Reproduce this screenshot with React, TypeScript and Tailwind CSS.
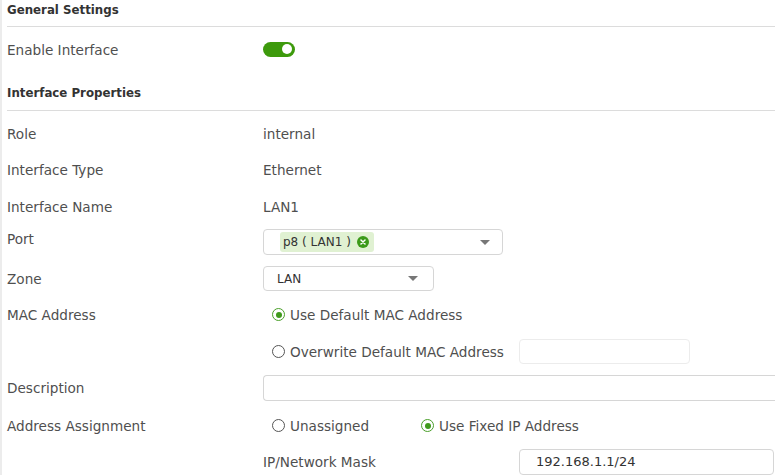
import React from "react";

const font = { fontFamily: '"DejaVu Sans", sans-serif' };

function Radio({ checked }: { checked?: boolean }) {
  return checked ? (
    <span className="inline-flex h-[13px] w-[13px] items-center justify-center rounded-full border-[1.5px] border-[#4a9f2a] mr-[5px]">
      <span className="h-[6px] w-[6px] rounded-full bg-[#3f9a1c]" />
    </span>
  ) : (
    <span className="inline-block h-[13px] w-[13px] rounded-full border-[1.5px] border-[#555] mr-[5px]" />
  );
}

function Caret() {
  return (
    <svg width="10" height="5" viewBox="0 0 10 5">
      <path d="M0 0 L10 0 L5 5 Z" fill="#777" />
    </svg>
  );
}

export default function App() {
  const label = "w-[256px] shrink-0 pt-[2px]";
  return (
    <div className="flex h-[475px] w-[775px] overflow-hidden bg-white text-[13.6px] text-[#4f4f4f]" style={font}>
      <div className="w-[2px] shrink-0 bg-[#ececec]" />
      <div className="flex-1 pl-[5px]">
        <div className="h-[27px] border-b border-[#dcdcdc] pt-[1px] text-[11.8px] font-bold text-[#333] leading-[19px]">General Settings</div>
        <div className="flex h-[44px] items-center">
          <div className={label}>Enable Interface</div>
          <div className="flex h-[15px] w-[32px] items-center justify-end rounded-full bg-[#3d9a0c] pr-[3px]">
            <div className="h-[10px] w-[10px] rounded-full bg-white" />
          </div>
        </div>
        <div className="h-[40px] border-b border-[#dcdcdc] pt-[13px] text-[11.8px] font-bold text-[#333] leading-[19px]">Interface Properties</div>
        <div className="mt-[4px] flex h-[36px] items-center">
          <div className={label}>Role</div>
          <div className="pt-[2px]">internal</div>
        </div>
        <div className="flex h-[37px] items-center">
          <div className={label}>Interface Type</div>
          <div className="pt-[2px]">Ethernet</div>
        </div>
        <div className="flex h-[36px] items-center">
          <div className={label}>Interface Name</div>
          <div className="pt-[2px]">LAN1</div>
        </div>
        <div className="flex h-[36px] items-center">
          <div className={`${label} mb-[8px]`}>Port</div>
          <div className="flex h-[26px] w-[240px] items-center justify-between rounded-[4px] border border-[#d6d6d6] pl-[16px] pr-[12px]">
            <div className="flex h-[20px] items-center rounded-[3px] bg-[#e0f1d2] pl-[3px] pr-[5px] text-[12px] text-[#333]">
              <span>p8 ( LAN1 )</span>
              <span className="ml-[6px] flex h-[12px] w-[12px] items-center justify-center rounded-full bg-[#3c9a1a]">
                <svg width="6" height="6" viewBox="0 0 6 6">
                  <path d="M1 1 L5 5 M5 1 L1 5" stroke="white" strokeWidth="1.5" strokeLinecap="round" />
                </svg>
              </span>
            </div>
            <Caret />
          </div>
        </div>
        <div className="flex h-[37px] items-center">
          <div className={label}>Zone</div>
          <div className="flex h-[25px] w-[171px] items-center justify-between rounded-[4px] border border-[#d6d6d6] pl-[13px] pr-[15px] text-[12px] text-[#333]">
            <span>LAN</span>
            <Caret />
          </div>
        </div>
        <div className="flex h-[34px] items-center pt-[2px]">
          <div className="w-[256px] shrink-0">MAC Address</div>
          <div className="flex items-center pl-[9px]">
            <Radio checked />
            <span>Use Default MAC Address</span>
          </div>
        </div>
        <div className="flex h-[40px] items-center">
          <div className={label}></div>
          <div className="flex w-[256px] items-center pl-[9px] pt-[2px]">
            <Radio />
            <span>Overwrite Default MAC Address</span>
          </div>
          <div className="h-[25px] w-[171px] rounded-[4px] border border-[#ececec]" />
        </div>
        <div className="flex h-[33px] items-center">
          <div className={label}>Description</div>
          <div className="h-[26px] flex-1 rounded-l-[4px] border border-r-0 border-[#d6d6d6]" />
        </div>
        <div className="flex h-[42px] items-center pt-[2px]">
          <div className="w-[256px] shrink-0">Address Assignment</div>
          <div className="flex w-[158px] items-center pl-[9px]">
            <Radio />
            <span>Unassigned</span>
          </div>
          <div className="flex items-center">
            <Radio checked />
            <span>Use Fixed IP Address</span>
          </div>
        </div>
        <div className="flex h-[31px] items-center">
          <div className={label}></div>
          <div className="w-[256px] pt-[2px]">IP/Network Mask</div>
          <div className="flex h-[26px] w-[255px] items-center rounded-[4px] border border-[#d6d6d6] pl-[16px] text-[13px] text-[#333]">
            192.168.1.1/24
          </div>
        </div>
      </div>
    </div>
  );
}
